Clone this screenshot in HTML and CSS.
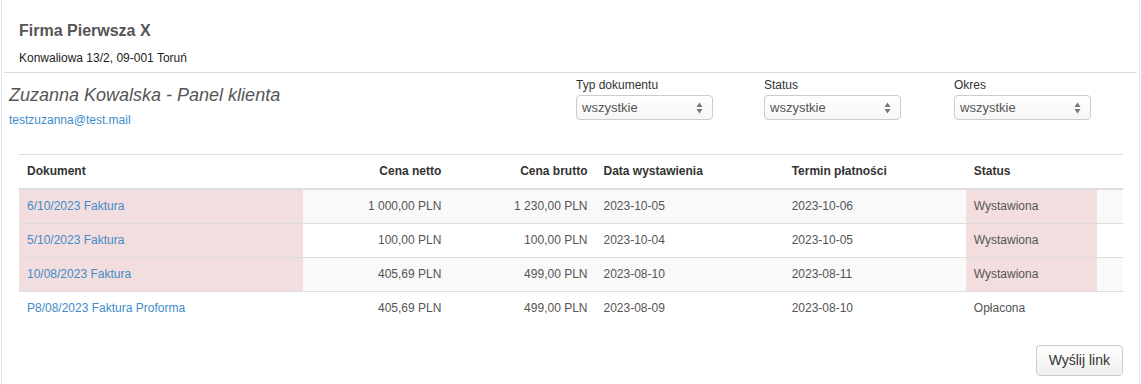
FILE: index.html
```html
<!DOCTYPE html>
<html lang="pl">
  <head>
    <meta charset="UTF-8" />
    <meta name="viewport" content="width=device-width, initial-scale=1.0" />
    <title>Panel klienta</title>
    <link rel="stylesheet" href="styles.css">
  </head>
  <body>
    <div class="panel">
      <div class="company">
        <h1>Firma Pierwsza X</h1>
        <p>Konwaliowa 13/2, 09-001 Toruń</p>
      </div>

      <div class="client">
        <div class="client-info">
          <h2>Zuzanna Kowalska - Panel klienta</h2>
          <a href="#">testzuzanna@test.mail</a>
        </div>

        <div class="filters">
          <div class="filter">
            <label>Typ dokumentu</label>
            <div class="select">
              <span>wszystkie</span>
              <svg width="7" height="12" viewBox="0 0 7 12"><path d="M3.5 0.5 L6.5 5 H0.5 Z M3.5 11.5 L6.5 7 H0.5 Z" fill="#777"/></svg>
            </div>
          </div>
          <div class="filter">
            <label>Status</label>
            <div class="select">
              <span>wszystkie</span>
              <svg width="7" height="12" viewBox="0 0 7 12"><path d="M3.5 0.5 L6.5 5 H0.5 Z M3.5 11.5 L6.5 7 H0.5 Z" fill="#777"/></svg>
            </div>
          </div>
          <div class="filter">
            <label>Okres</label>
            <div class="select">
              <span>wszystkie</span>
              <svg width="7" height="12" viewBox="0 0 7 12"><path d="M3.5 0.5 L6.5 5 H0.5 Z M3.5 11.5 L6.5 7 H0.5 Z" fill="#777"/></svg>
            </div>
          </div>
        </div>
      </div>

      <div class="documents">
        <table>
          <colgroup>
            <col style="width: 284px" />
            <col style="width: 146px" />
            <col style="width: 146px" />
            <col style="width: 188px" />
            <col style="width: 182px" />
            <col style="width: 131px" />
            <col style="width: 26px" />
          </colgroup>
          <thead>
            <tr>
              <th>Dokument</th>
              <th class="num">Cena netto</th>
              <th class="num">Cena brutto</th>
              <th>Data wystawienia</th>
              <th>Termin płatności</th>
              <th>Status</th>
              <th></th>
            </tr>
          </thead>
          <tbody>
            <tr>
              <td class="danger"><a href="#">6/10/2023 Faktura</a></td>
              <td class="num">1 000,00 PLN</td>
              <td class="num">1 230,00 PLN</td>
              <td>2023-10-05</td>
              <td>2023-10-06</td>
              <td class="danger">Wystawiona</td>
              <td></td>
            </tr>
            <tr>
              <td class="danger"><a href="#">5/10/2023 Faktura</a></td>
              <td class="num">100,00 PLN</td>
              <td class="num">100,00 PLN</td>
              <td>2023-10-04</td>
              <td>2023-10-05</td>
              <td class="danger">Wystawiona</td>
              <td></td>
            </tr>
            <tr>
              <td class="danger"><a href="#">10/08/2023 Faktura</a></td>
              <td class="num">405,69 PLN</td>
              <td class="num">499,00 PLN</td>
              <td>2023-08-10</td>
              <td>2023-08-11</td>
              <td class="danger">Wystawiona</td>
              <td></td>
            </tr>
            <tr>
              <td><a href="#">P8/08/2023 Faktura Proforma</a></td>
              <td class="num">405,69 PLN</td>
              <td class="num">499,00 PLN</td>
              <td>2023-08-09</td>
              <td>2023-08-10</td>
              <td>Opłacona</td>
              <td></td>
            </tr>
          </tbody>
        </table>

        <div class="actions">
          <button>Wyślij link</button>
        </div>
      </div>
    </div>
  </body>
</html>
```

FILE: styles.css
```css
html,
body {
  margin: 0;
  padding: 0;
  background-color: white;
}
body {
  font-family: "Liberation Sans", Arial, sans-serif;
  font-size: 12px;
  line-height: 17px;
  color: #333;
}
a {
  color: #428bca;
  text-decoration: none;
}
.panel {
  margin: 0 1px;
  min-height: 384px;
  border-left: 1px solid #dde4eb;
  border-right: 1px solid #dde4eb;
  box-sizing: border-box;
}
.company {
  margin: 0 2px;
  padding: 20px 15px 5px;
  border-bottom: 1px solid #d5dee6;
}
.company h1 {
  margin: 0;
  font-size: 16px;
  line-height: 22px;
  color: #555;
}
.company p {
  margin: 8px 0 0;
  color: #222;
}
.client {
  display: grid;
  grid-template-columns: 567px auto;
  padding: 4px 0 0 7px;
}
.client-info h2 {
  margin: 8px 0 0;
  font-size: 18px;
  line-height: 20px;
  font-weight: normal;
  font-style: italic;
  color: #555;
}
.client-info a {
  display: block;
  margin-top: 7px;
}
.filters {
  display: grid;
  grid-template-columns: 188px 190px 137px;
}
.filter label {
  display: block;
  color: #333;
}
.select {
  display: flex;
  align-items: center;
  justify-content: space-between;
  width: 137px;
  height: 25px;
  margin-top: 1px;
  padding: 0 9px 0 5px;
  box-sizing: border-box;
  border: 1px solid #ccc;
  border-radius: 4px;
  background: linear-gradient(#fff, #f6f6f6);
  font-size: 13px;
  color: #555;
}
.documents {
  padding: 25px 16px 0 17px;
}
table {
  width: 100%;
  table-layout: fixed;
  border-collapse: collapse;
  border-spacing: 0;
}
th,
td {
  padding: 8px;
  text-align: left;
  border-top: 1px solid #ddd;
  white-space: nowrap;
}
th {
  color: #333;
  border-bottom: 2px solid #ddd;
}
td {
  color: #555;
}
.num {
  text-align: right;
}
tbody tr:nth-child(odd) td {
  background-color: #f9f9f9;
}
tbody tr td.danger {
  background-color: #f2dede;
}
.actions {
  display: flex;
  justify-content: flex-end;
  margin-top: 20px;
}
button {
  font-family: "Liberation Sans", Arial, sans-serif;
  font-size: 14px;
  line-height: 19px;
  padding: 5px 12px;
  color: #333;
  border: 1px solid #ccc;
  border-radius: 4px;
  background: linear-gradient(#fff, #efefef);
  cursor: pointer;
}
```
